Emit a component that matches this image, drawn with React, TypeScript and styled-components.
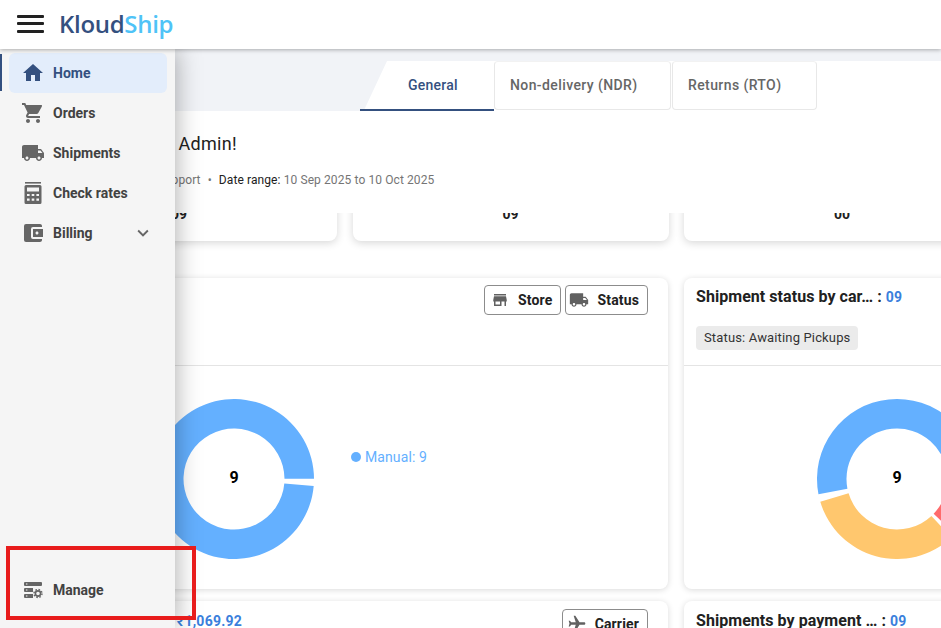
import styled, { createGlobalStyle } from 'styled-components';
import {
  MdAccountBalanceWallet,
  MdExpandMore,
  MdFlight,
  MdHome,
  MdLocalShipping,
  MdShoppingCart,
  MdStore,
} from 'react-icons/md';

const GlobalStyle = createGlobalStyle`
  html, body {
    margin: 0;
    padding: 0;
    background: #ffffff;
    font-family: Roboto, "Liberation Sans", sans-serif;
  }
  * { box-sizing: border-box; }
`;

const Page = styled.div`
  position: relative;
  width: 100vw;
  height: 100vh;
  overflow: hidden;
  display: flex;
  flex-direction: column;
  background: #fff;
`;

const Header = styled.header`
  position: relative;
  z-index: 3;
  flex: none;
  height: 49px;
  display: flex;
  align-items: center;
  padding: 0 0 2px 17px;
  gap: 15px;
  background: #fff;
  box-shadow: 0 1px 4px rgba(0, 0, 0, 0.3);
`;

const Burger = styled.div`
  width: 27px;
  height: 18px;
  display: flex;
  flex-direction: column;
  justify-content: space-between;
  & > span {
    display: block;
    height: 3px;
    background: #212121;
    border-radius: 1px;
  }
`;

const Logo = styled.div`
  font-family: "Open Sans", sans-serif;
  font-size: 24px;
  font-weight: 600;
  letter-spacing: -0.3px;
  color: #34507f;
  & > span {
    color: #4fc3f7;
  }
`;

const Sidebar = styled.nav`
  position: absolute;
  z-index: 2;
  left: 0;
  top: 49px;
  bottom: 0;
  width: 175px;
  padding: 4px 8px 18px 9px;
  display: flex;
  flex-direction: column;
  background: #f5f5f5;
  box-shadow: 0 0 24px rgba(0, 0, 0, 0.35);
`;

const NavItem = styled.div<{ $active?: boolean }>`
  position: relative;
  height: 40px;
  flex: none;
  display: flex;
  align-items: center;
  padding: 0 16px 0 12px;
  gap: 8px;
  border-radius: 6px;
  font-size: 14px;
  font-weight: 700;
  color: ${(p) => (p.$active ? '#34507f' : '#424242')};
  background: ${(p) => (p.$active ? '#e3edfb' : 'transparent')};
  & > svg:first-child {
    flex: none;
    color: ${(p) => (p.$active ? '#34507f' : '#666666')};
  }
`;

const ActiveMark = styled.i`
  position: absolute;
  left: -9px;
  top: 1px;
  bottom: 2px;
  width: 1.5px;
  background: #34507f;
`;

const NavChevron = styled(MdExpandMore)`
  margin-left: auto;
  margin-right: -3px;
  color: #666666;
`;

const NavSpacer = styled.div`
  flex: 1;
`;

const Main = styled.main`
  flex: 1;
  min-height: 0;
  display: flex;
  flex-direction: column;
`;

const TabBand = styled.div`
  flex: none;
  padding-top: 12px;
  background: #f1f3f7;
`;

const TabRow = styled.div`
  height: 50px;
  display: flex;
  background: #fff;
`;

const TabSpacer = styled.div`
  width: 360px;
  background: #f1f3f7;
`;

const GeneralTab = styled.div`
  position: relative;
  width: 134px;
  display: flex;
  align-items: center;
  padding: 0 0 1px 48px;
  font-size: 14px;
  font-weight: 500;
  letter-spacing: 0.25px;
  color: #34507f;
  border-bottom: 2px solid #34507f;
  &::before {
    content: '';
    position: absolute;
    left: 0;
    top: 0;
    width: 27px;
    height: 48px;
    background: #f1f3f7;
    clip-path: polygon(0 0, 100% 0, 17% 100%, 0 100%);
  }
`;

const Tab = styled.div<{ $width: number }>`
  width: ${(p) => p.$width}px;
  height: 49px;
  display: flex;
  align-items: center;
  padding: 0 0 1px 15px;
  font-size: 14px;
  font-weight: 500;
  letter-spacing: 0.4px;
  color: #666666;
  border: 1px solid #e8e8e8;
  border-top-color: #f2f2f2;
  border-radius: 4px;
  & + & {
    margin-left: 1px;
  }
`;

const Intro = styled.section`
  flex: none;
  height: 102px;
  padding: 22px 0 0 127px;
  background: #fff;
`;

const Greeting = styled.h1`
  margin: 0;
  font-size: 18px;
  line-height: 22px;
  font-weight: 400;
  letter-spacing: 0.3px;
  color: #212121;
`;

const Meta = styled.p`
  margin: 17px 0 0;
  font-size: 12px;
  line-height: 16px;
  letter-spacing: 0.1px;
  color: #757575;
  & > b {
    font-weight: 400;
    color: #212121;
  }
  & > u {
    text-decoration: none;
    margin: 0 7px;
  }
`;

const StatWindow = styled.div`
  flex: none;
  height: 65px;
  overflow: hidden;
  padding-left: 21px;
`;

const StatRow = styled.div`
  margin-top: -72px;
  display: grid;
  grid-template-columns: repeat(3, 316px);
  gap: 15.5px;
`;

const StatCard = styled.div`
  height: 100px;
  padding-bottom: 19px;
  display: flex;
  align-items: flex-end;
  justify-content: center;
  border-radius: 8px;
  background: #fff;
  font-size: 14px;
  line-height: 16px;
  font-weight: 700;
  color: #212121;
  box-shadow: 0 2px 8px rgba(0, 0, 0, 0.16);
`;

const CardGrid = styled.div`
  padding-left: 21px;
  display: grid;
  grid-template-columns: repeat(2, 647px);
  grid-auto-rows: 311px;
  gap: 12px 16px;
`;

const Card = styled.article`
  display: flex;
  flex-direction: column;
  border-radius: 8px;
  background: #fff;
  box-shadow: 0 1px 6px rgba(0, 0, 0, 0.15);
`;

const CardHead = styled.div<{ $padTop: number }>`
  position: relative;
  flex: none;
  height: 88px;
  padding: ${(p) => p.$padTop}px 12px 0;
  border-bottom: 1px solid #e4e4e4;
`;

const CardTitle = styled.h2`
  margin: 0;
  font-size: 16px;
  line-height: 20px;
  font-weight: 700;
  letter-spacing: 0.05px;
  color: #212121;
  & > span {
    font-size: 14px;
    letter-spacing: 0.25px;
    color: #3a7fdc;
  }
`;

const Chip = styled.div`
  display: inline-block;
  margin-top: 19px;
  height: 24px;
  padding: 0 8px;
  border-radius: 4px;
  background: #ebebeb;
  font-size: 13px;
  line-height: 24px;
  letter-spacing: 0.15px;
  color: #333333;
`;

const Actions = styled.div<{ $top: number }>`
  position: absolute;
  right: 20px;
  top: ${(p) => p.$top}px;
  display: flex;
  gap: 4px;
`;

const ActionButton = styled.div`
  height: 30px;
  display: flex;
  align-items: center;
  gap: 9px;
  padding: 0 8px 0 5px;
  border: 1px solid #8c8c8c;
  border-radius: 4px;
  font-size: 14px;
  font-weight: 700;
  letter-spacing: 0.15px;
  color: #212121;
  & > svg {
    color: #616161;
  }
`;

const StoreIcon = styled(MdStore)`
  margin-left: 1px;
`;

const TruckIcon = styled(MdLocalShipping)`
  margin: 0 -1px 0 -2px;
`;

const PlaneIcon = styled(MdFlight)`
  margin: 0 -1px;
  transform: rotate(90deg);
`;

const ChartBody = styled.div`
  flex: 1;
  display: flex;
  align-items: center;
  padding: 2px 0 0 133px;
  gap: 37px;
`;

const Legend = styled.div`
  display: flex;
  align-items: center;
  gap: 4px;
  margin-bottom: 44px;
  font-size: 14px;
  letter-spacing: 0.1px;
  color: #64b0ff;
  white-space: nowrap;
  &::before {
    content: '';
    width: 10px;
    height: 10px;
    border-radius: 50%;
    background: #64b0ff;
  }
`;

const Annotation = styled.div`
  position: absolute;
  z-index: 4;
  left: 6px;
  top: 546px;
  width: 190px;
  height: 74px;
  border: 4px solid #e81c1c;
`;

// angles are clockwise from 3 o'clock, like the chart library draws them
function arc(from: number, to: number) {
  const c = 80;
  const R = 80;
  const r = 50.5;
  const pt = (rad: number, a: number) => {
    const t = (a * Math.PI) / 180;
    return `${(c + rad * Math.cos(t)).toFixed(2)} ${(c + rad * Math.sin(t)).toFixed(2)}`;
  };
  const large = to - from > 180 ? 1 : 0;
  return `M${pt(R, from)} A${R} ${R} 0 ${large} 1 ${pt(R, to)} L${pt(r, to)} A${r} ${r} 0 ${large} 0 ${pt(r, from)} Z`;
}

function Donut({ slices, total }: { slices: { from: number; to: number; color: string }[]; total: number }) {
  return (
    <svg width={160} height={160} viewBox="0 0 160 160" style={{ flex: 'none' }}>
      {slices.map((s) => (
        <path key={s.from} d={arc(s.from, s.to)} fill={s.color} />
      ))}
      <text x={80} y={84} textAnchor="middle" fontSize={16} fontWeight={700} fill="#000000" fontFamily="Roboto, sans-serif">
        {total}
      </text>
    </svg>
  );
}

function CalcIcon() {
  return (
    <svg width={24} height={22} viewBox="-3 0 24 22" fill="#666666">
      <rect x={1} y={0} width={16} height={1.6} />
      <path fillRule="evenodd" d="M2 3h14a1.5 1.5 0 0 1 1.5 1.5v16a1.5 1.5 0 0 1-1.5 1.5H2a1.5 1.5 0 0 1-1.5-1.5v-16A1.5 1.5 0 0 1 2 3ZM3 5.5v4h12v-4ZM3 12v2h2.6v-2Zm4.7 0v2h2.6v-2Zm4.7 0v2H15v-2ZM3 16.5v2.2h2.6v-2.2Zm4.7 0v2.2h2.6v-2.2Zm4.7 0v2.2H15v-2.2Z" />
    </svg>
  );
}

function ManageIcon() {
  return (
    <svg width={24} height={18} viewBox="-3 0 24 18" fill="#666666">
      <path fillRule="evenodd" d="M1 1h16a1 1 0 0 1 1 1v2a1 1 0 0 1-1 1H1a1 1 0 0 1-1-1V2a1 1 0 0 1 1-1Zm1 1.4v1.2h1.4V2.4ZM1 7h8v4H1a1 1 0 0 1-1-1V8a1 1 0 0 1 1-1Zm1 1.4v1.2h1.4V8.4ZM1 13h8v4H1a1 1 0 0 1-1-1v-2a1 1 0 0 1 1-1Zm1 1.4v1.2h1.4v-1.2Z" />
      <circle cx={14} cy={12.5} r={2.6} fill="none" stroke="#666666" strokeWidth={1.6} />
      <circle cx={14} cy={12.5} r={4} fill="none" stroke="#666666" strokeWidth={1.4} strokeDasharray="1.6 1.54" />
    </svg>
  );
}

export default function App() {
  const blue = '#64b0ff';
  return (
    <Page>
      <GlobalStyle />
      <Header>
        <Burger>
          <span />
          <span />
          <span />
        </Burger>
        <Logo>
          Kloud<span>Ship</span>
        </Logo>
      </Header>

      <Sidebar>
        <NavItem $active>
          <MdHome size={24} />
          Home
          <ActiveMark />
        </NavItem>
        <NavItem>
          <MdShoppingCart size={24} />
          Orders
        </NavItem>
        <NavItem>
          <MdLocalShipping size={24} />
          Shipments
        </NavItem>
        <NavItem>
          <CalcIcon />
          Check rates
        </NavItem>
        <NavItem>
          <MdAccountBalanceWallet size={24} />
          Billing
          <NavChevron size={22} />
        </NavItem>
        <NavSpacer />
        <NavItem>
          <ManageIcon />
          Manage
        </NavItem>
      </Sidebar>

      <Main>
        <TabBand>
          <TabRow>
            <TabSpacer />
            <GeneralTab>General</GeneralTab>
            <Tab $width={177}>Non-delivery (NDR)</Tab>
            <Tab $width={145}>Returns (RTO)</Tab>
          </TabRow>
        </TabBand>

        <Intro>
          <Greeting>Hello, Admin!</Greeting>
          <Meta>
            Need support<u>•</u>
            <b>Date range:</b> 10 Sep 2025 to 10 Oct 2025
          </Meta>
        </Intro>

        <StatWindow>
          <StatRow>
            <StatCard>09</StatCard>
            <StatCard>09</StatCard>
            <StatCard>00</StatCard>
          </StatRow>
        </StatWindow>

        <CardGrid>
          <Card>
            <CardHead $padTop={9}>
              <CardTitle>
                By store : <span>09</span>
              </CardTitle>
              <Actions $top={7}>
                <ActionButton>
                  <StoreIcon size={18} />
                  Store
                </ActionButton>
                <ActionButton>
                  <TruckIcon size={20} />
                  Status
                </ActionButton>
              </Actions>
            </CardHead>
            <ChartBody>
              <Donut total={9} slices={[{ from: 5, to: 359.8, color: blue }]} />
              <Legend>Manual: 9</Legend>
            </ChartBody>
          </Card>

          <Card>
            <CardHead $padTop={9}>
              <CardTitle>
                Shipment status by car… : <span>09</span>
              </CardTitle>
              <Chip>Status: Awaiting Pickups</Chip>
            </CardHead>
            <ChartBody>
              <Donut
                total={9}
                slices={[
                  { from: 169, to: 359, color: blue },
                  { from: 47, to: 163.5, color: '#ffc76e' },
                  { from: 5, to: 43.5, color: '#ff6b6b' },
                ]}
              />
              <Legend>Awaiting Pickups: 9</Legend>
            </ChartBody>
          </Card>

          <Card>
            <CardHead $padTop={10}>
              <CardTitle>
                Revenue by carrier: <span>₹1,069.92</span>
              </CardTitle>
              <Actions $top={8}>
                <ActionButton>
                  <PlaneIcon size={20} />
                  Carrier
                </ActionButton>
              </Actions>
            </CardHead>
          </Card>

          <Card>
            <CardHead $padTop={10}>
              <CardTitle>
                Shipments by payment … : <span>09</span>
              </CardTitle>
            </CardHead>
          </Card>
        </CardGrid>
      </Main>

      <Annotation />
    </Page>
  );
}
